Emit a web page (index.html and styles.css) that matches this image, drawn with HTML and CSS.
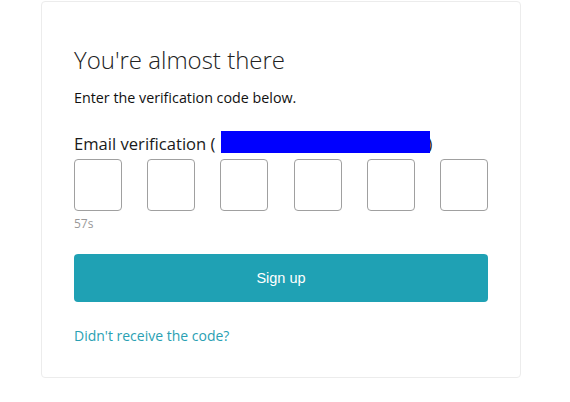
FILE: index.html
```html
<!DOCTYPE html>
<html>
<head>
<meta charset="utf-8">
<link rel="stylesheet" href="styles.css">
</head>
<body>
<div class="card">
  <h1 class="title">You're almost there</h1>
  <p class="subtitle">Enter the verification code below.</p>
  <div class="label">Email verification (<span class="redact"></span>)</div>
  <div class="codes">
    <input class="code" type="text" maxlength="1">
    <input class="code" type="text" maxlength="1">
    <input class="code" type="text" maxlength="1">
    <input class="code" type="text" maxlength="1">
    <input class="code" type="text" maxlength="1">
    <input class="code" type="text" maxlength="1">
  </div>
  <div class="timer">57s</div>
  <button class="btn">Sign up</button>
  <a class="resend" href="#">Didn't receive the code?</a>
</div>
</body>
</html>
```
FILE: styles.css
```css
html, body {
  margin: 0;
  padding: 0;
  background: #fff;
}
body {
  font-family: "Open Sans", "Noto Sans", sans-serif;
  color: #1a1a1a;
}
.card {
  box-sizing: border-box;
  margin: 1px 0 0 41px;
  width: 480px;
  height: 377px;
  border: 1px solid #ececec;
  border-radius: 4px;
  padding: 41px 32px 0 32px;
  display: flex;
  flex-direction: column;
}
.title {
  margin: 0;
  font-size: 24px;
  font-weight: 300;
  line-height: 33px;
  color: #222;
}
.subtitle {
  margin: 12px 0 0 0;
  font-size: 14.3px;
  line-height: 19px;
  color: #111;
}
.label {
  margin-top: 26px;
  font-size: 16.6px;
  line-height: 22px;
  color: #1a1a1a;
  display: flex;
  align-items: center;
}
.redact {
  display: inline-block;
  width: 209px;
  height: 22px;
  background: #0000ff;
  margin-left: 6px;
  margin-right: -3px;
  position: relative;
  top: -2px;
  z-index: 1;
}
.codes {
  margin-top: 4px;
  display: flex;
  justify-content: space-between;
  width: 414px;
}
.code {
  box-sizing: border-box;
  width: 48px;
  height: 52px;
  border: 1px solid #a0a0a0;
  border-radius: 4px;
  padding: 0;
  margin: 0;
  background: #fff;
}
.timer {
  margin-top: 5px;
  font-size: 12px;
  line-height: 16px;
  color: #999;
}
.btn {
  margin-top: 22px;
  width: 414px;
  height: 48px;
  border: none;
  border-radius: 4px;
  background: #1fa1b4;
  color: #fff;
  font-family: "Liberation Sans", Arial, sans-serif;
  font-size: 14.5px;
  cursor: pointer;
}
.resend {
  margin-top: 24px;
  font-size: 14px;
  line-height: 19px;
  color: #2a9fb3;
  text-decoration: none;
  align-self: flex-start;
}
```
